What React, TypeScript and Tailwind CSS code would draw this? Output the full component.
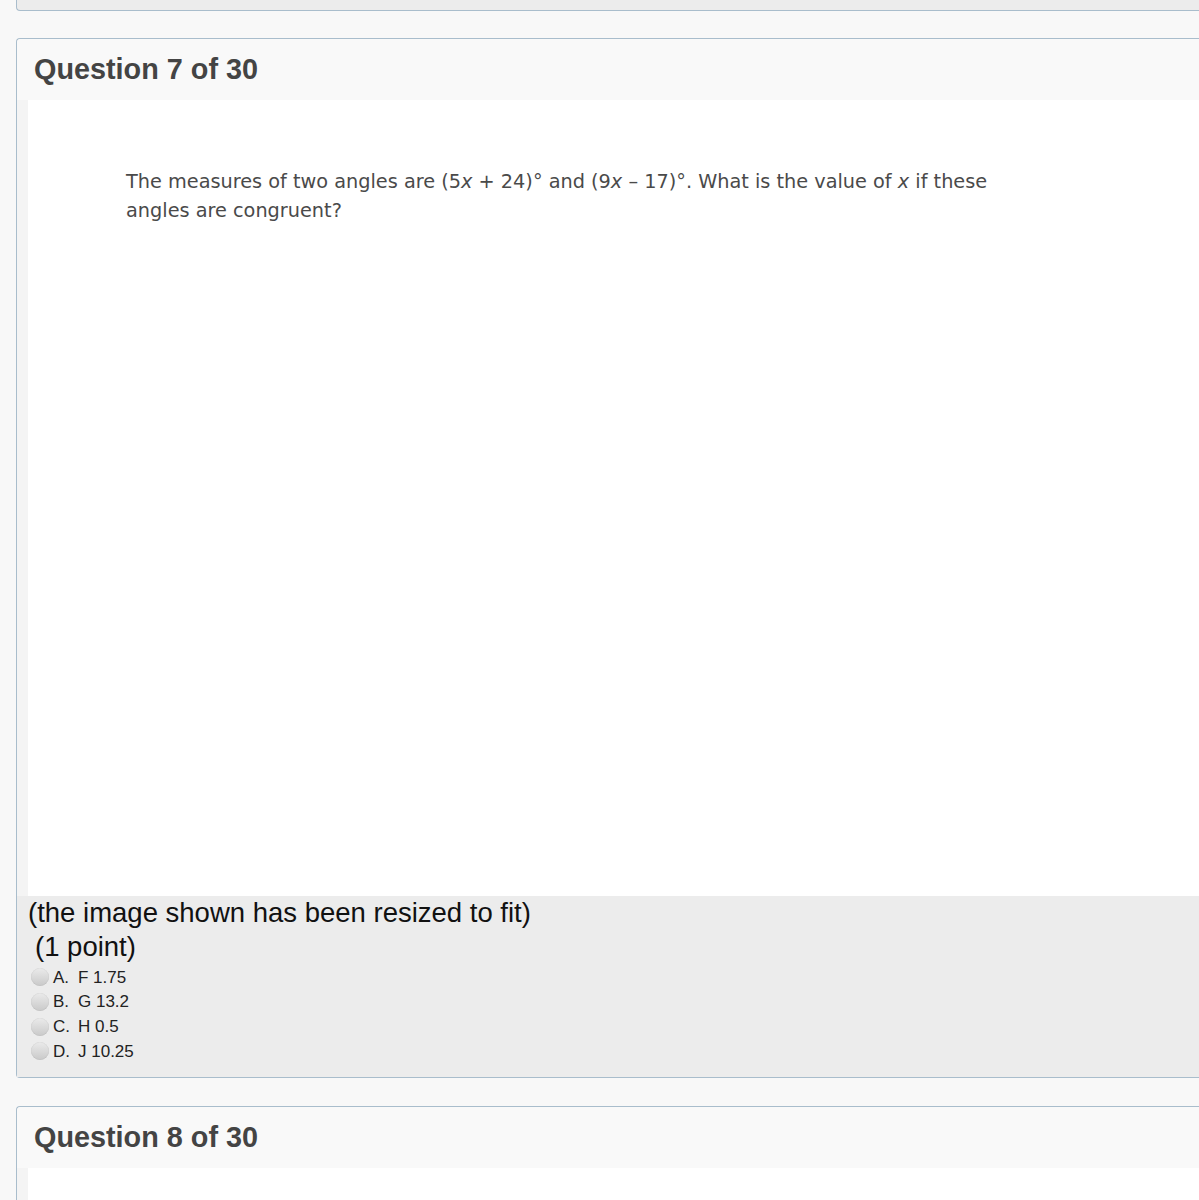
const options = [
  { letter: "A.", text: "F 1.75" },
  { letter: "B.", text: "G 13.2" },
  { letter: "C.", text: "H 0.5" },
  { letter: "D.", text: "J 10.25" },
]

function Radio() {
  return (
    <span className="inline-block w-[18px] h-[18px] rounded-full bg-gradient-to-b from-[#ebebeb] to-[#c9c9c9] shadow-[inset_0_0_1px_rgba(0,0,0,0.2)]" />
  )
}

function CardHeader({ title }: { title: string }) {
  return (
    <div className="h-[61px] bg-[#f9f9f9] flex items-center pl-[17px] rounded-tl">
      <h2 className="text-[28.8px] font-bold text-[#444] font-['Liberation_Sans',Arial,sans-serif]">
        {title}
      </h2>
    </div>
  )
}

export default function App() {
  return (
    <div className="w-[1199px] h-[1200px] overflow-hidden bg-[#f8f8f8] font-['Liberation_Sans',Arial,sans-serif]">
      {/* tail of previous question */}
      <div className="ml-4 h-[11px] bg-[#ececec] border-l border-b border-[#a9bdcc] rounded-bl" />

      {/* Question 7 */}
      <div className="ml-4 mt-[27px] border-l border-t border-b border-[#a9bdcc] rounded-l bg-[#f4f4f4]">
        <CardHeader title="Question 7 of 30" />

        <div className="ml-[11px] h-[796px] bg-white pt-[67px] pl-[98px]">
          <p className="w-[900px] text-[19.3px] leading-[29px] text-[#4a4a4a] font-['DejaVu_Sans',Verdana,sans-serif]">
            The measures of two angles are (5<i>x</i> + 24)° and (9<i>x</i> – 17)°. What is the value of{" "}
            <i>x</i> if these angles are congruent?
          </p>
        </div>

        <div className="bg-[#ececec] pb-[13px] text-[#111]">
          <p className="pl-[11px] text-[27.5px] leading-[33px]">(the image shown has been resized to fit)</p>
          <p className="pl-[18px] text-[27.5px] leading-[36px]">(1 point)</p>
          <div className="flex flex-col">
            {options.map((o) => (
              <label key={o.letter} className="h-[24.7px] flex items-center text-[17px] text-[#222]">
                <span className="ml-[14px] flex items-center">
                  <Radio />
                </span>
                <span className="ml-[4px] w-[25px]">{o.letter}</span>
                <span>{o.text}</span>
              </label>
            ))}
          </div>
        </div>
      </div>

      {/* Question 8 */}
      <div className="ml-4 mt-[28px] border-l border-t border-[#a9bdcc] rounded-tl bg-[#f4f4f4]">
        <CardHeader title="Question 8 of 30" />
        <div className="ml-[11px] h-[200px] bg-white" />
      </div>
    </div>
  )
}
